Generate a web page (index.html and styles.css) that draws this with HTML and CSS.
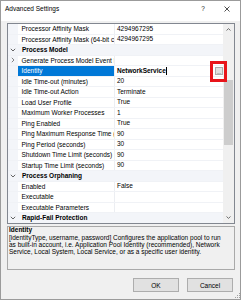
FILE: index.html
```html
<!DOCTYPE html>
<html lang="en">
<head>
  <meta charset="UTF-8">
  <meta name="viewport" content="width=device-width, initial-scale=1.0">
  <title>Advanced Settings</title>
  <link rel="stylesheet" href="styles.css">
</head>
<body>
  <div class="dialog">
    <div class="titlebar">
      <span class="title">Advanced Settings</span>
      <span class="help">?</span>
      <span class="close">
        <svg width="6" height="6" viewBox="0 0 6 6"><path d="M0.5 0.5L5.5 5.5M5.5 0.5L0.5 5.5" stroke="#222" stroke-width="0.8" fill="none"/></svg>
      </span>
    </div>

    <div class="content">
      <!-- Property grid -->
      <div class="grid">
        <div class="rows">
          <div class="row"><span class="gutter"></span><span class="name">Processor Affinity Mask</span><span class="value">4294967295</span></div>
          <div class="row"><span class="gutter"></span><span class="name">Processor Affinity Mask (64-bit c</span><span class="value">4294967295</span></div>
          <div class="row category">
            <span class="gutter"><svg width="6" height="4" viewBox="0 0 6 4"><polyline points="0.8,0.8 3,3 5.2,0.8" stroke="#555" stroke-width="0.9" fill="none"/></svg></span>
            <span class="cat-name">Process Model</span>
          </div>
          <div class="row">
            <span class="gutter"><svg width="4" height="6" viewBox="0 0 4 6"><polyline points="0.8,0.8 3,3 0.8,5.2" stroke="#777" stroke-width="0.9" fill="none"/></svg></span>
            <span class="name">Generate Process Model Event L</span><span class="value"></span>
          </div>
          <div class="row">
            <span class="gutter"></span><span class="name selected">Identity</span>
            <span class="value"><b>NetworkService</b><span class="caret"></span><span class="dots">...</span></span>
          </div>
          <div class="row"><span class="gutter"></span><span class="name">Idle Time-out (minutes)</span><span class="value">20</span></div>
          <div class="row"><span class="gutter"></span><span class="name">Idle Time-out Action</span><span class="value">Terminate</span></div>
          <div class="row"><span class="gutter"></span><span class="name">Load User Profile</span><span class="value">True</span></div>
          <div class="row"><span class="gutter"></span><span class="name">Maximum Worker Processes</span><span class="value">1</span></div>
          <div class="row"><span class="gutter"></span><span class="name">Ping Enabled</span><span class="value">True</span></div>
          <div class="row"><span class="gutter"></span><span class="name">Ping Maximum Response Time (</span><span class="value">90</span></div>
          <div class="row"><span class="gutter"></span><span class="name">Ping Period (seconds)</span><span class="value">30</span></div>
          <div class="row"><span class="gutter"></span><span class="name">Shutdown Time Limit (seconds)</span><span class="value">90</span></div>
          <div class="row"><span class="gutter"></span><span class="name">Startup Time Limit (seconds)</span><span class="value">90</span></div>
          <div class="row category">
            <span class="gutter"><svg width="6" height="4" viewBox="0 0 6 4"><polyline points="0.8,0.8 3,3 5.2,0.8" stroke="#555" stroke-width="0.9" fill="none"/></svg></span>
            <span class="cat-name">Process Orphaning</span>
          </div>
          <div class="row"><span class="gutter"></span><span class="name">Enabled</span><span class="value">False</span></div>
          <div class="row"><span class="gutter"></span><span class="name">Executable</span><span class="value"></span></div>
          <div class="row"><span class="gutter"></span><span class="name">Executable Parameters</span><span class="value"></span></div>
          <div class="row category">
            <span class="gutter"><svg width="6" height="4" viewBox="0 0 6 4"><polyline points="0.8,0.8 3,3 5.2,0.8" stroke="#555" stroke-width="0.9" fill="none"/></svg></span>
            <span class="cat-name">Rapid-Fail Protection</span>
          </div>
        </div>

        <div class="scrollbar">
          <span class="arrow"><svg width="5" height="3" viewBox="0 0 5 3"><polyline points="0.5,2.5 2.5,0.6 4.5,2.5" stroke="#606060" stroke-width="0.9" fill="none"/></svg></span>
          <span class="track"><span class="thumb"></span></span>
          <span class="arrow"><svg width="5" height="3" viewBox="0 0 5 3"><polyline points="0.5,0.5 2.5,2.4 4.5,0.5" stroke="#606060" stroke-width="0.9" fill="none"/></svg></span>
        </div>
      </div>

      <!-- Description pane -->
      <div class="description">
        <div class="desc-title">Identity</div>
        <div class="desc-text">[identityType, username, password] Configures the application pool to run<br>as built-in account, i.e. Application Pool Identity (recommended), Network<br>Service, Local System, Local Service, or as a specific user identity.</div>
      </div>

      <div class="buttons">
        <button>OK</button>
        <button>Cancel</button>
      </div>
    </div>

    <span class="grip">
      <svg width="5" height="5" viewBox="0 0 5 5" fill="#a0a0a0"><rect x="4" y="0" width="1" height="1"/><rect x="2" y="2" width="1" height="1"/><rect x="4" y="2" width="1" height="1"/><rect x="0" y="4" width="1" height="1"/><rect x="2" y="4" width="1" height="1"/><rect x="4" y="4" width="1" height="1"/></svg>
    </span>
    <span class="highlight"></span>
  </div>
</body>
</html>
```

FILE: styles.css
```css
* {
  box-sizing: border-box;
}

body {
  margin: 0;
  font-family: "Liberation Sans", Arial, sans-serif;
  font-size: 6.5px;
  color: #000;
  background-color: #fff;
}

.dialog {
  position: relative;
  width: 241px;
  height: 300px;
  border: 1px solid #9b9b9b;
  background-color: #f0f0f0;
  display: flex;
  flex-direction: column;
}

.titlebar {
  height: 20px;
  background-color: #fff;
  display: flex;
  align-items: flex-start;
  padding: 4px 9px 0 4px;
  line-height: 8px;
}

.title {
  flex: 1;
}

.help {
  width: 8px;
  text-align: center;
  margin-right: 16px;
  color: #222;
}

.close {
  width: 8px;
  height: 8px;
  display: flex;
  align-items: center;
  justify-content: center;
}

.content {
  flex: 1;
  display: flex;
  flex-direction: column;
  padding: 2px 5px 0 6px;
}

.grid {
  height: 201px;
  border: 1px solid #828790;
  background-color: #fff;
  display: flex;
}

.rows {
  flex: 1;
  overflow: hidden;
}

.row {
  display: flex;
  height: 10.5px;
  line-height: 10px;
  border-bottom: 1px solid #f0f2f6;
}

.gutter {
  width: 10px;
  flex-shrink: 0;
  background-color: #f3f5f9;
  display: flex;
  align-items: center;
  justify-content: center;
}

.name {
  width: 97px;
  flex-shrink: 0;
  padding-left: 3.5px;
  border-right: 1px solid #eceef2;
  white-space: nowrap;
  overflow: hidden;
}

.name.selected {
  background-color: #0078d7;
  color: #fff;
}

.value {
  flex: 1;
  display: flex;
  align-items: center;
  padding-left: 2px;
  white-space: nowrap;
}

.caret {
  width: 1px;
  height: 8px;
  margin-left: 0.5px;
  background-color: #000;
}

.dots {
  margin-left: auto;
  width: 8px;
  height: 8px;
  border: 1px solid #adadad;
  background-color: #e1e1e1;
  font-size: 5px;
  line-height: 8px;
  text-align: center;
  color: #333;
}

.category {
  background-color: #f3f5f9;
}

.cat-name {
  padding-left: 4px;
  font-weight: bold;
  white-space: nowrap;
}

.scrollbar {
  width: 11px;
  flex-shrink: 0;
  background-color: #f0f0f0;
  display: flex;
  flex-direction: column;
}

.arrow {
  height: 11px;
  display: flex;
  align-items: center;
  justify-content: center;
}

.track {
  flex: 1;
  padding: 45px 1px 0;
}

.thumb {
  display: block;
  height: 65px;
  background-color: #cdcdcd;
}

.description {
  height: 44px;
  margin-top: 2px;
  border: 1px solid #a9a9a9;
  padding-left: 1px;
}

.desc-title {
  font-weight: bold;
  line-height: 6.5px;
}

.desc-text {
  line-height: 7.2px;
  white-space: nowrap;
}

.buttons {
  display: flex;
  justify-content: flex-end;
  gap: 8px;
  margin-top: 8px;
  padding-right: 2px;
}

button {
  width: 46px;
  height: 14px;
  padding: 0;
  border: 1px solid #adadad;
  background-color: #e1e1e1;
  font-family: "Liberation Sans", Arial, sans-serif;
  font-size: 6.5px;
  color: #000;
}

.grip {
  position: absolute;
  right: 0;
  bottom: 1px;
  line-height: 0;
}

.highlight {
  position: absolute;
  left: 209px;
  top: 60px;
  width: 17px;
  height: 21px;
  border: 3px solid #e8141a;
}
```
